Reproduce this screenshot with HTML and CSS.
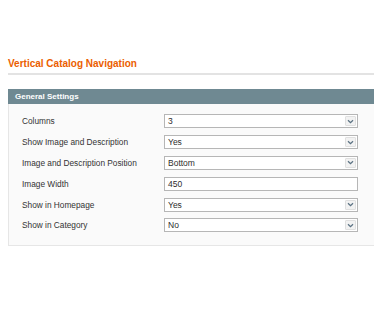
FILE: index.html
```html
<!DOCTYPE html>
<html lang="en">
<head>
<meta charset="UTF-8">
<meta name="viewport" content="width=device-width, initial-scale=1.0">
<title>Vertical Catalog Navigation</title>
<link rel="stylesheet" href="styles.css">
</head>
<body>
<div id="page">
    <h2 class="page-title">Vertical Catalog Navigation</h2>
    <div class="section">
        <div class="section-head">General Settings</div>
        <div class="section-body">
            <div class="row">
                <label>Columns</label>
                <div class="field select"><span class="value">3</span><span class="arrow"><svg width="7" height="5" viewBox="0 0 7 5"><path d="M1 1.2 L3.5 3.6 L6 1.2" fill="none" stroke="#5b7283" stroke-width="1.3"/></svg></span></div>
            </div>
            <div class="row">
                <label>Show Image and Description</label>
                <div class="field select"><span class="value">Yes</span><span class="arrow"><svg width="7" height="5" viewBox="0 0 7 5"><path d="M1 1.2 L3.5 3.6 L6 1.2" fill="none" stroke="#5b7283" stroke-width="1.3"/></svg></span></div>
            </div>
            <div class="row">
                <label>Image and Description Position</label>
                <div class="field select"><span class="value">Bottom</span><span class="arrow"><svg width="7" height="5" viewBox="0 0 7 5"><path d="M1 1.2 L3.5 3.6 L6 1.2" fill="none" stroke="#5b7283" stroke-width="1.3"/></svg></span></div>
            </div>
            <div class="row">
                <label>Image Width</label>
                <div class="field"><span class="value">450</span></div>
            </div>
            <div class="row">
                <label>Show in Homepage</label>
                <div class="field select"><span class="value">Yes</span><span class="arrow"><svg width="7" height="5" viewBox="0 0 7 5"><path d="M1 1.2 L3.5 3.6 L6 1.2" fill="none" stroke="#5b7283" stroke-width="1.3"/></svg></span></div>
            </div>
            <div class="row">
                <label>Show in Category</label>
                <div class="field select"><span class="value">No</span><span class="arrow"><svg width="7" height="5" viewBox="0 0 7 5"><path d="M1 1.2 L3.5 3.6 L6 1.2" fill="none" stroke="#5b7283" stroke-width="1.3"/></svg></span></div>
            </div>
        </div>
    </div>
</div>
</body>
</html>
```

FILE: styles.css
```css
body {
    margin: 0;
    background-color: #fff;
    font-family: "Liberation Sans", Arial, sans-serif;
    overflow: hidden;
}
#page {
    padding: 57px 0 0 8px;
}
.page-title {
    margin: 0;
    font-size: 10px;
    line-height: 13px;
    font-weight: bold;
    color: #eb5e00;
    padding-bottom: 3px;
    border-bottom: 2px solid #e3e3e3;
}
.section {
    margin-top: 14px;
}
.section-head {
    height: 15px;
    line-height: 15px;
    padding-left: 7px;
    background-color: #6f8992;
    color: #fff;
    font-size: 8px;
    font-weight: bold;
}
.section-body {
    background-color: #fafafa;
    border-left: 1px solid #e6e6e6;
    border-bottom: 1px solid #e6e6e6;
    padding: 7px 0 9px 13px;
}
.row {
    display: flex;
    align-items: center;
    height: 20.8px;
}
.row label {
    width: 142px;
    font-size: 8.3px;
    color: #333;
}
.field {
    display: flex;
    align-items: center;
    width: 192px;
    height: 12px;
    border: 1px solid #b6b6b6;
    background-color: #fff;
    font-size: 8.5px;
    color: #2d2d2d;
}
.field .value {
    flex: 1;
    padding-left: 3px;
}
.field .arrow {
    width: 11px;
    height: 10px;
    margin-right: 1px;
    border: 1px solid #e0e0e0;
    border-radius: 1px;
    background-color: #f2f2f2;
    display: flex;
    align-items: center;
    justify-content: center;
    box-sizing: border-box;
}
```
